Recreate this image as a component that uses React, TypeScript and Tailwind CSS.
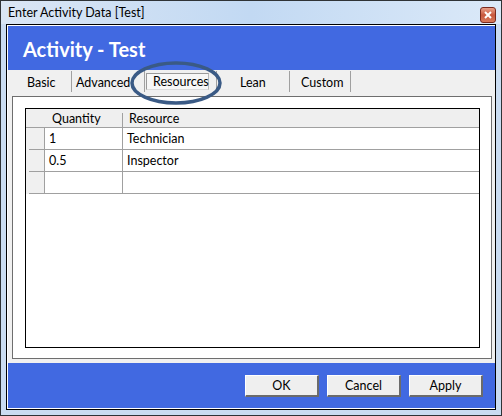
import React from 'react';

const tabs = [
  { label: 'Basic', w: 'w-[64px]', pl: 'pl-[19px]' },
  { label: 'Advanced', w: 'w-[73px]', pl: 'pl-[4px]' },
];

const rows = [
  { qty: '1', res: 'Technician' },
  { qty: '0.5', res: 'Inspector' },
  { qty: '', res: '' },
];

const Tab: React.FC<{ label: string; className?: string }> = ({ label, className = '' }) => (
  <div className={`h-[21px] mt-[1px] pt-[3px] flex items-center border-r border-[#a0a0a0] ${className}`}>
    <span>{label}</span>
  </div>
);

const DlgButton: React.FC<{ label: string }> = ({ label }) => (
  <button className="w-[74px] h-[22px] pt-[2px] bg-[#efefef] border-t border-l border-white border-r-2 border-b-2 border-r-[#6b6b6b] border-b-[#6b6b6b] flex items-center justify-center text-[12.5px] text-black">
    {label}
  </button>
);

export default function App() {
  return (
    <div className="relative w-[502px] h-[416px] border border-[#2f3336] bg-[#cadcf1] flex flex-col font-['Lato',sans-serif] text-[12.5px] text-black leading-none">
      {/* title bar */}
      <div className="h-[23px] flex items-center pl-[7px] pr-[5px] bg-gradient-to-r from-[#dae6f4] via-[#c2d9f3] to-[#dbe9f8]">
        <span className="text-[12.5px] text-black pt-[2px]">Enter Activity Data [Test]</span>
        <div className="ml-auto mt-[4px] w-[16px] h-[16px] rounded-[3px] border border-[#7a2a1e] bg-gradient-to-b from-[#e8a08a] via-[#c8583e] to-[#d77a5c] flex items-center justify-center">
          <svg width="8" height="8" viewBox="0 0 8 8">
            <path d="M1 1 L7 7 M7 1 L1 7" stroke="#ffffff" strokeWidth="2" />
          </svg>
        </div>
      </div>

      <div className="flex-1 px-[5px] pb-[5px] flex">
        <div className="flex-1 border border-black flex">
          <div className="flex-1 border-l border-t border-b border-white flex flex-col">
            {/* blue heading */}
            <div className="h-[44px] bg-[#4169e1] flex items-center pl-[15px] pt-[2px]">
              <span className="text-white font-bold text-[20px] leading-none">Activity - Test</span>
            </div>

            {/* tab area */}
            <div className="flex-1 bg-[#f0f0f0] flex flex-col pl-[4px] pr-[3px] pb-[4px]">
              <div className="h-[26px] flex -ml-[4px]">
                {tabs.map((t) => (
                  <Tab key={t.label} label={t.label} className={`${t.w} ${t.pl}`} />
                ))}
                <div className="w-[72px] flex items-start pl-[1px] border-r border-[#a0a0a0] mt-[1px] h-[21px]">
                  <div className="mt-[2px] w-[63px] h-[17px] pt-[2px] bg-[#f7f7f7] border border-[#9a9a9a] border-b-[#dcdcdc] border-r-[#b8b8b8] flex items-center pl-[6px]">
                    Resources
                  </div>
                </div>
                <Tab label="Lean" className="w-[73px] pl-[23px]" />
                <Tab label="Custom" className="w-[61px] pl-[11px]" />
              </div>

              {/* panel */}
              <div className="flex-1 border border-[#6e6e6e] bg-white pl-[12px] pr-[11px] pt-[11px] pb-[10px] flex">
                <div className="flex-1 border border-black flex flex-col">
                  <div className="h-[19px] bg-[#efefef] flex border-b border-[#a0a0a0]">
                    <div className="w-[19px]" />
                    <div className="w-[78px] flex items-center pl-[7px] border-r border-[#a0a0a0] h-[14px] self-end">
                      <span className="-mt-[1px]">Quantity</span>
                    </div>
                    <div className="flex-1 flex items-center pl-[6px] pt-[2px]">Resource</div>
                  </div>
                  {rows.map((r, i) => (
                    <div key={i} className="h-[22px] flex">
                      <div className="w-[19px] bg-[#f0f0f0] border-r border-[#a0a0a0] flex flex-col">
                        <div className="flex-1" />
                        <div className="ml-[3px] border-b border-[#a0a0a0]" />
                      </div>
                      <div className="w-[78px] border-r border-b border-[#a0a0a0] flex items-center pl-[4px] pt-[2px]">{r.qty}</div>
                      <div className="flex-1 border-b border-[#a0a0a0] flex items-center pl-[4px] pt-[2px]">{r.res}</div>
                    </div>
                  ))}
                  <div className="flex-1" />
                </div>
              </div>
            </div>

            {/* bottom bar */}
            <div className="h-[45px] bg-[#4169e1] flex items-center justify-end gap-[8px] pr-[12px] pt-[1px]">
              <DlgButton label="OK" />
              <DlgButton label="Cancel" />
              <DlgButton label="Apply" />
            </div>
          </div>
        </div>
      </div>

      {/* annotation ellipse */}
      <svg className="absolute left-0 top-0 pointer-events-none" width="502" height="416">
        <ellipse cx="175" cy="82" rx="44" ry="20" fill="none" stroke="#3a5a85" strokeWidth="3.5" />
      </svg>
    </div>
  );
}
